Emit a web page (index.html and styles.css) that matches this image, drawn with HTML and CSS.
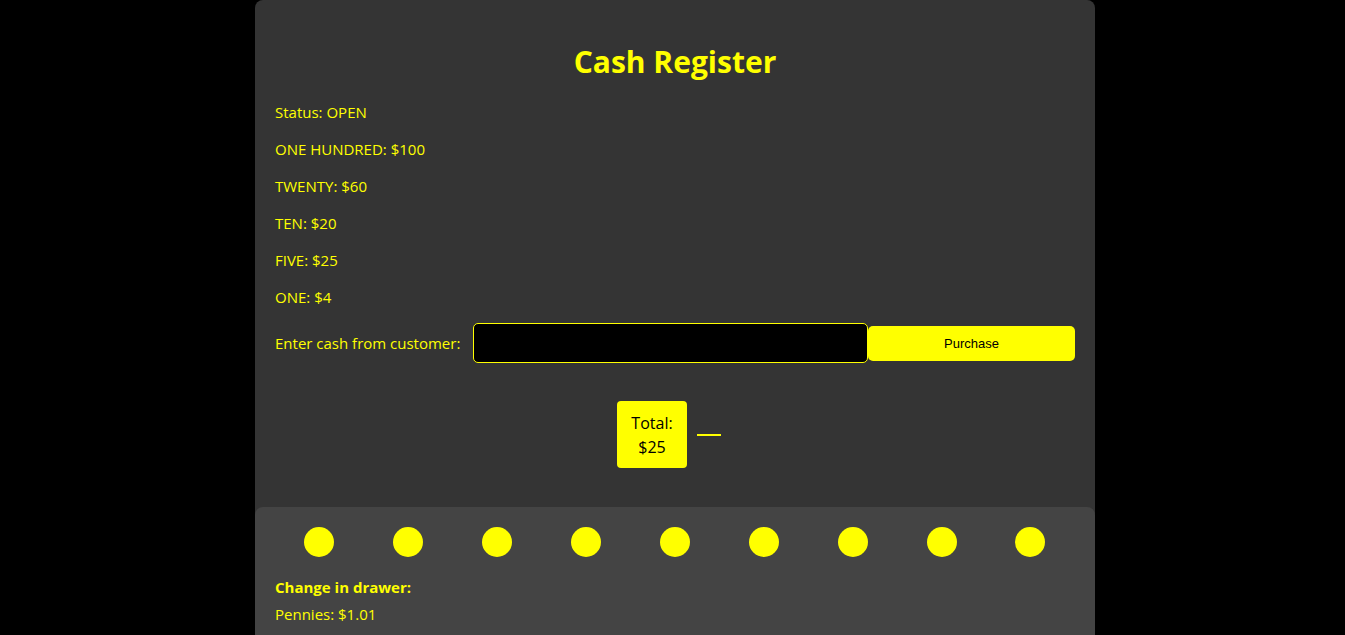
FILE: index.html
```html
<!DOCTYPE html>
<html lang="en">
<head>
<meta charset="utf-8">
<title>Cash Register</title>
<link rel="stylesheet" href="styles.css">
</head>
<body>
<div class="register">
  <div class="main">
    <h1 class="title">Cash Register</h1>
    <div class="stock">
      <p class="line">Status: OPEN</p>
      <p class="line">ONE HUNDRED: $100</p>
      <p class="line">TWENTY: $60</p>
      <p class="line">TEN: $20</p>
      <p class="line">FIVE: $25</p>
      <p class="line">ONE: $4</p>
    </div>
    <div class="entry">
      <label class="entry-label" for="cash">Enter cash from customer:</label>
      <input class="entry-input" id="cash" type="number">
      <button class="entry-button" type="button">Purchase</button>
    </div>
    <div class="total-row">
      <div class="total-box">Total:<br>$25</div>
      <div class="total-dash"></div>
    </div>
  </div>
  <div class="drawer">
    <div class="coins">
      <span class="coin"></span><span class="coin"></span><span class="coin"></span>
      <span class="coin"></span><span class="coin"></span><span class="coin"></span>
      <span class="coin"></span><span class="coin"></span><span class="coin"></span>
    </div>
    <p class="drawer-title">Change in drawer:</p>
    <p class="drawer-line">Pennies: $1.01</p>
    <p class="drawer-line">Nickels: $2.05</p>
    <p class="drawer-line">Dimes: $3.10</p>
  </div>
</div>
</body>
</html>
```

FILE: styles.css
```css
html, body {
  margin: 0;
  padding: 0;
  background: #000;
  height: 100%;
  overflow: hidden;
}
body {
  padding-left: 5px;
  box-sizing: border-box;
  font-family: "Open Sans", "Noto Sans", sans-serif;
  font-size: 15px;
  color: #ffff00;
}
.register {
  width: 840px;
  margin: 0 auto;
  background: #343434;
  border-radius: 8px;
}
.main {
  padding: 20px 20px 39px;
}
.title {
  margin: 21px 0 0;
  font-size: 30px;
  line-height: 42px;
  font-weight: 700;
  text-align: center;
}
.stock {
  padding-top: 19px;
  display: flex;
  flex-direction: column;
  gap: 16px;
}
.line {
  margin: 0;
  line-height: 21px;
}
.entry {
  margin-top: 15px;
  display: flex;
  align-items: center;
}
.entry-label {
  line-height: 21px;
  margin-right: 13px;
  white-space: nowrap;
}
.entry-input {
  flex: 1;
  height: 40px;
  box-sizing: border-box;
  background: #000;
  border: 1px solid #ffff00;
  border-radius: 5px;
  color: #ffff00;
  margin: 0;
}
.entry-button {
  width: 207px;
  height: 35px;
  background: #ffff00;
  border: none;
  border-radius: 5px;
  color: #000;
  font-family: "Liberation Sans", Arial, sans-serif;
  font-size: 13px;
  margin: 0;
}
.total-row {
  margin-top: 38px;
  display: flex;
  justify-content: center;
  align-items: center;
  gap: 10px;
  padding-right: 12px;
}
.total-box {
  width: 70px;
  height: 67px;
  box-sizing: border-box;
  background: #ffff00;
  color: #000;
  border-radius: 4px;
  display: flex;
  align-items: center;
  justify-content: center;
  text-align: center;
  font-size: 16px;
  line-height: 24px;
}
.total-dash {
  width: 24px;
  height: 2px;
  background: #ffff00;
}
.drawer {
  background: #444;
  border-radius: 8px;
  padding: 20px;
}
.coins {
  display: flex;
  justify-content: space-around;
}
.coin {
  width: 30px;
  height: 30px;
  border-radius: 50%;
  background: #ffff00;
}
.drawer-title {
  margin: 20px 0 0;
  font-weight: 700;
  line-height: 21px;
}
.drawer-line {
  margin: 6px 0 0;
  line-height: 21px;
}
```
